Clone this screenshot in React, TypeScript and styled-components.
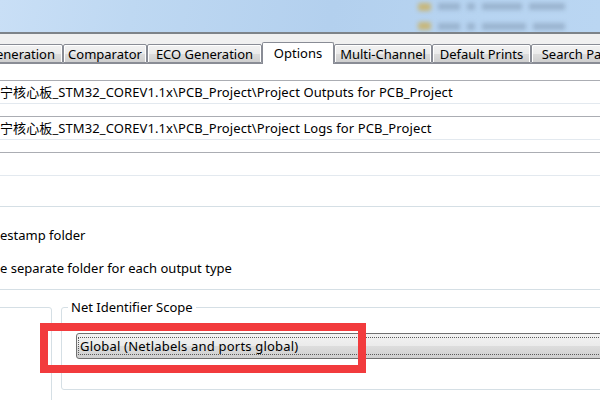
import styled, { createGlobalStyle } from 'styled-components';

const GlobalStyle = createGlobalStyle`
  html, body {
    margin: 0;
    padding: 0;
    background: #fff;
  }
  body {
    width: 600px;
    height: 400px;
    overflow: hidden;
    font-family: "Noto Sans", "Noto Sans CJK SC", sans-serif;
    font-size: 13px;
    color: #000;
  }
`;

const Screen = styled.div`
  width: 600px;
  height: 400px;
  overflow: hidden;
  display: flex;
  flex-direction: column;
`;

// blurred explorer window behind the dialog
const Backdrop = styled.div`
  height: 32px;
  flex: none;
  display: flex;
  justify-content: flex-end;
  overflow: hidden;
  background: linear-gradient(100deg, #c9dff6 0%, #bed8f2 22%, #b3d0ee 55%, #b7d4f1 80%, #bad6f2 100%);
`;

const BlurList = styled.div`
  width: 182px;
  padding-top: 1px;
  display: flex;
  flex-direction: column;
  gap: 8px;
  filter: blur(2px);
`;

const BlurRow = styled.div`
  display: flex;
  align-items: center;
  gap: 7px;
  height: 12px;
`;

const BlurIcon = styled.div`
  width: 13px;
  height: 8px;
  border-radius: 2px;
  background: #c7b77c;
`;

const BlurText = styled.div<{ $w: number }>`
  width: ${(p) => p.$w}px;
  height: 7px;
  background: #8ea7c2;
  opacity: 0.7;
`;

const Frame = styled.div`
  height: 2px;
  flex: none;
  background: #7d8389;
`;

const Dialog = styled.div`
  flex: 1;
  display: flex;
  flex-direction: column;
  background: #f0f0f0;
  padding-top: 9px;
`;

const TabStrip = styled.div`
  display: flex;
  align-items: flex-end;
  height: 20px;
  margin-left: -58px;
  position: relative;
  z-index: 1;
`;

const Tab = styled.div<{ $w: number; $active?: boolean }>`
  box-sizing: border-box;
  flex: none;
  width: ${(p) => p.$w}px;
  height: ${(p) => (p.$active ? 22 : 19)}px;
  margin-bottom: ${(p) => (p.$active ? -1 : 0)}px;
  display: flex;
  align-items: center;
  justify-content: center;
  padding-bottom: ${(p) => (p.$active ? 2 : 0)}px;
  border: 1px solid #898c95;
  border-bottom: ${(p) => (p.$active ? 'none' : '1px solid #898c95')};
  border-radius: 2px 2px 0 0;
  background: ${(p) =>
    p.$active ? '#fff' : 'linear-gradient(#f2f2f2 0%, #ebebeb 50%, #dddddd 51%, #cfcfcf 100%)'};
  box-shadow: ${(p) => (p.$active ? 'none' : 'inset 1px 1px 0 #fff, inset -1px 0 0 #fff')};
  white-space: nowrap;
  overflow: hidden;
  color: #000;
`;

const ClippedTab = styled(Tab)`
  justify-content: flex-end;
  padding-right: 7px;
`;

const TabPage = styled.div`
  flex: 1;
  display: flex;
  flex-direction: column;
  background: #fff;
  border-top: 1px solid #898c95;
  padding-top: 16px;
`;

const PathField = styled.div`
  box-sizing: border-box;
  height: 24px;
  margin: 0 -10px 12px -10px;
  padding-left: 10px;
  border-top: 1px solid #abadb3;
  border-bottom: 1px solid #e3e9ef;
  line-height: 22px;
  letter-spacing: 0.1px;
  white-space: nowrap;
  background: #fff;
`;

const OutputGroup = styled.div`
  box-sizing: border-box;
  height: 84px;
  margin: 18px -10px 0 -10px;
  padding: 19px 0 0 10px;
  border-top: 1px solid #d5dfe5;
  border-bottom: 1px solid #d5dfe5;
  display: flex;
  flex-direction: column;
  gap: 15px;
`;

const CheckRow = styled.div`
  height: 18px;
  line-height: 18px;
  display: flex;
  white-space: nowrap;
`;

// the start of a label that is cut off by the left edge of the window
const HiddenStart = styled.span`
  width: 0;
  display: flex;
  justify-content: flex-end;
`;

const BottomRow = styled.div`
  position: relative;
  display: flex;
  align-items: flex-start;
  margin-top: 8px;
`;

const SideGroup = styled.div`
  flex: none;
  width: 62px;
  height: 120px;
  margin: 9px 0 0 -10px;
  box-sizing: border-box;
  border: 1px solid #d5dfe5;
  border-radius: 3px;
`;

const ScopeGroup = styled.fieldset`
  flex: 1;
  min-width: 0;
  margin: 0 -20px 0 9px;
  padding: 17px 0 30px 14px;
  border: 1px solid #d5dfe5;
  border-radius: 3px;
`;

const ScopeLegend = styled.legend`
  margin-left: -8px;
  padding: 0 3px;
  line-height: 18px;
  color: #000;
`;

const ComboBox = styled.div`
  box-sizing: border-box;
  height: 26px;
  padding: 3px 1px;
  border: 1px solid #707070;
  border-radius: 3px;
  background: linear-gradient(#f2f2f2 0%, #ebebeb 50%, #dddddd 51%, #cfcfcf 100%);
`;

const FocusRect = styled.div`
  box-sizing: border-box;
  height: 18px;
  border: 1px dotted #5a5a5a;
  padding-left: 1px;
  line-height: 16px;
  letter-spacing: 0.2px;
  white-space: nowrap;
`;

const Highlight = styled.div`
  position: absolute;
  left: 40px;
  top: 25px;
  width: 326px;
  height: 50px;
  box-sizing: border-box;
  border: 8px solid #f23b3d;
  pointer-events: none;
`;

const tabs = [
  { label: 'Comparator', w: 84 },
  { label: 'ECO Generation', w: 115 },
  { label: 'Options', w: 72, active: true },
  { label: 'Multi-Channel', w: 98 },
  { label: 'Default Prints', w: 99 },
  { label: 'Search Paths', w: 100 },
];

export default function App() {
  return (
    <Screen>
      <GlobalStyle />
      <Backdrop>
        <BlurList>
          <BlurRow>
            <BlurIcon />
            <BlurText $w={22} />
            <BlurText $w={8} />
            <BlurText $w={40} />
            <BlurText $w={36} />
          </BlurRow>
          <BlurRow>
            <BlurIcon />
            <BlurText $w={22} />
            <BlurText $w={8} />
            <BlurText $w={44} />
            <BlurText $w={32} />
          </BlurRow>
        </BlurList>
      </Backdrop>
      <Frame />
      <Dialog>
        <TabStrip>
          <ClippedTab $w={121}>Class Generation</ClippedTab>
          {tabs.map((t) => (
            <Tab key={t.label} $w={t.w} $active={t.active}>
              {t.label}
            </Tab>
          ))}
        </TabStrip>
        <TabPage>
          <PathField>宁核心板_STM32_COREV1.1x\PCB_Project\Project Outputs for PCB_Project</PathField>
          <PathField>宁核心板_STM32_COREV1.1x\PCB_Project\Project Logs for PCB_Project</PathField>
          <PathField />
          <OutputGroup>
            <CheckRow>
              <HiddenStart>Use tim</HiddenStart>
              <span>estamp folder</span>
            </CheckRow>
            <CheckRow>
              <HiddenStart>Us</HiddenStart>
              <span>e separate folder for each output type</span>
            </CheckRow>
          </OutputGroup>
          <BottomRow>
            <SideGroup />
            <ScopeGroup>
              <ScopeLegend>Net Identifier Scope</ScopeLegend>
              <ComboBox>
                <FocusRect>Global (Netlabels and ports global)</FocusRect>
              </ComboBox>
            </ScopeGroup>
            <Highlight />
          </BottomRow>
        </TabPage>
      </Dialog>
    </Screen>
  );
}
